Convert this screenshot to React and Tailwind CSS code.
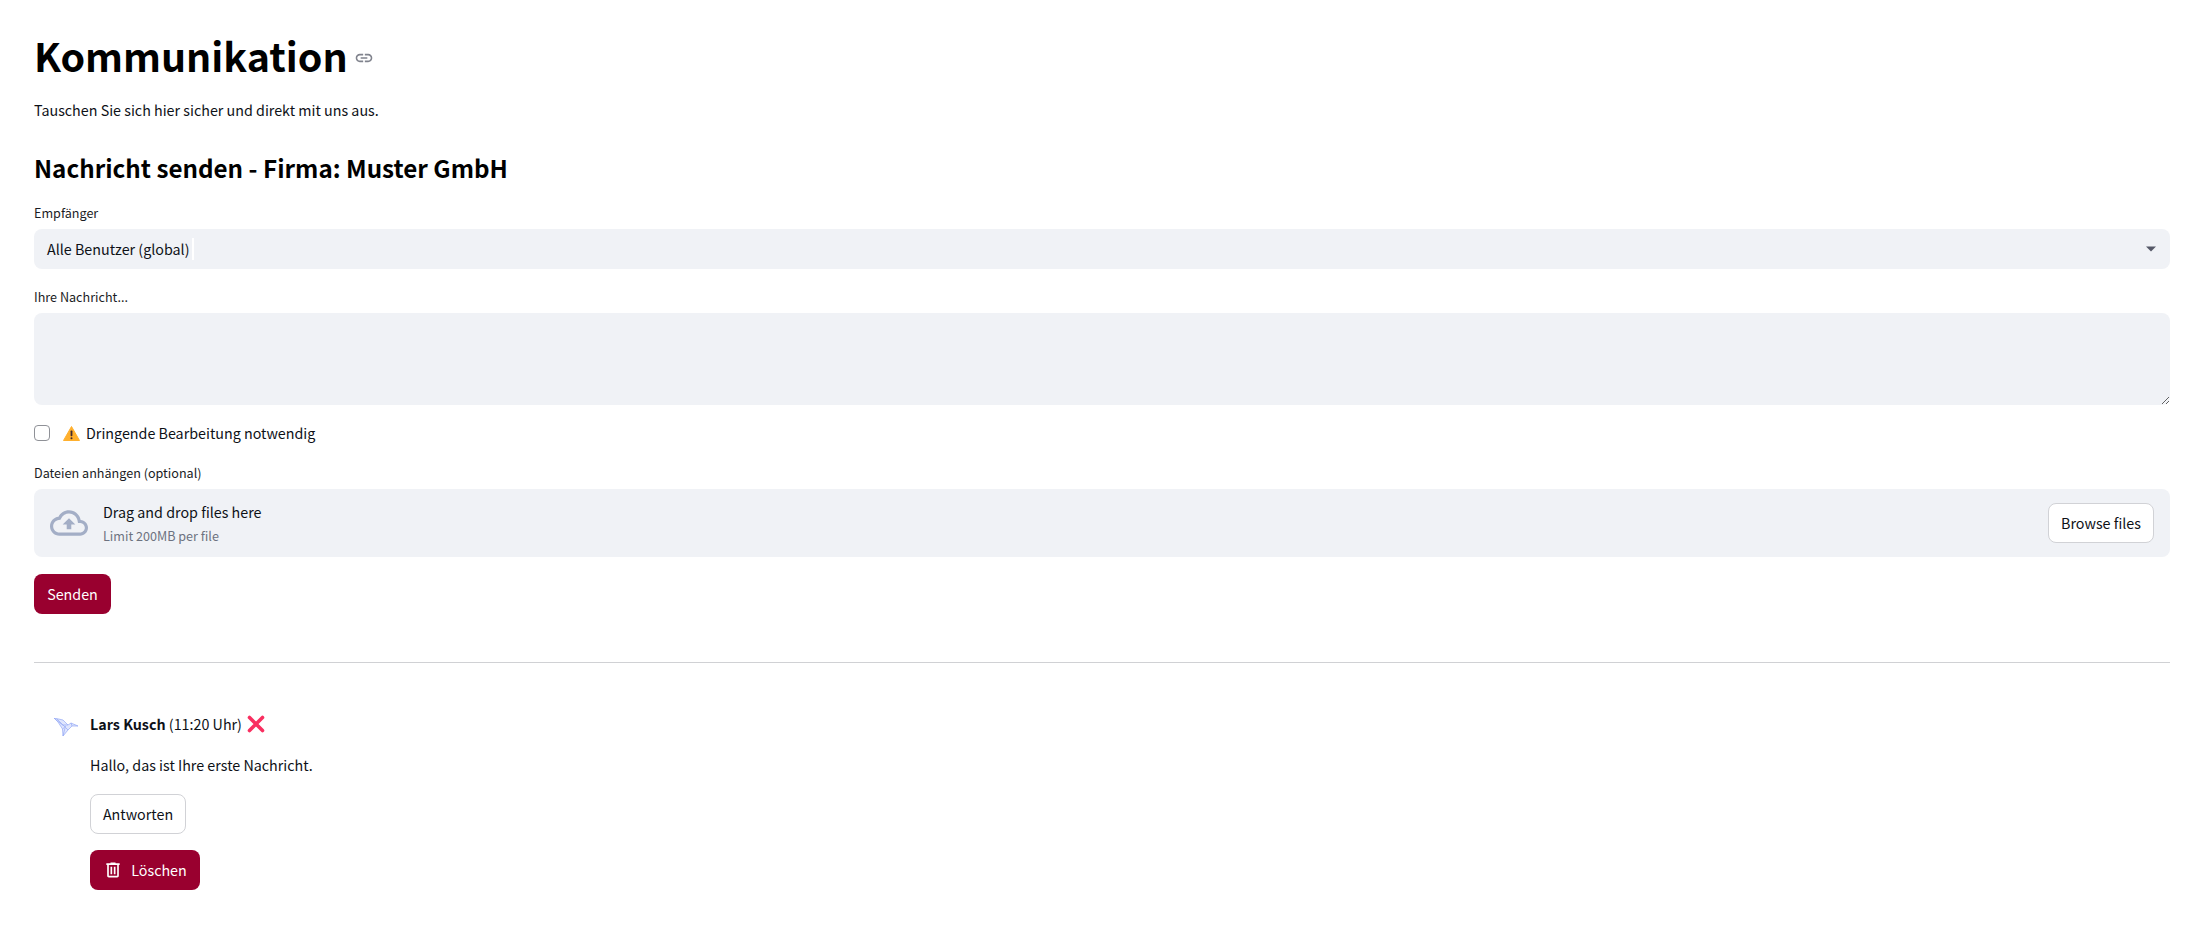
import React from 'react';

const FONT = '"Noto Sans CJK SC", "Source Sans Pro", "Noto Sans", sans-serif';

const Label = ({ children }) => (
  <div className="text-[12.6px] leading-[20px] h-[20px] text-[#1a1c24]">{children}</div>
);

const WarnIcon = () => (
  <svg width="17" height="15" viewBox="0 0 17 15" className="shrink-0">
    <path d="M8.5 0.5 L16.5 14.5 L0.5 14.5 Z" fill="#ffb02e" stroke="#ffb02e" strokeLinejoin="round" />
    <rect x="7.6" y="4.5" width="1.8" height="5.8" rx="0.7" fill="#402a32" />
    <circle cx="8.5" cy="12.2" r="1" fill="#402a32" />
  </svg>
);

const CrossIcon = () => (
  <svg width="18" height="18" viewBox="0 0 18 18" className="shrink-0">
    <path d="M2.5 2.5 L15.5 15.5 M15.5 2.5 L2.5 15.5" stroke="#f92f60" strokeWidth="3.6" strokeLinecap="round" />
  </svg>
);

// small hummingbird avatar
const Bird = () => (
  <svg width="24" height="18" viewBox="0 0 24 18" fill="none" stroke="#93a7f5" strokeWidth="0.7">
    <path d="M0 0 L9 2 L14 7 L17 5 L24 8 L18 8 L14 12 L9 18 L8.5 11 L4 4 Z" fill="#dfe6fd" />
    <path d="M0 0 L8.5 7 L14 7 M3 1 L10 8 L14 12 M8.5 11 L12 8 M9 18 L11 10 M17 5 L18 8" />
  </svg>
);

export default function App() {
  return (
    <div className="min-h-[932px] bg-white pl-[34px] pr-[21px] text-[#0e1117] overflow-hidden" style={{ fontFamily: FONT }}>
      {/* Page header */}
      <div className="flex items-center pt-[25px] h-[84px]">
        <h1 className="text-[39.4px] leading-[56px] font-bold text-black">Kommunikation</h1>
        <svg width="20" height="20" viewBox="0 0 24 24" fill="#80838d" className="ml-[6px] mt-[6px]">
          <path d="M3.9 12c0-1.71 1.39-3.1 3.1-3.1h4V7H7c-2.76 0-5 2.24-5 5s2.24 5 5 5h4v-1.9H7c-1.71 0-3.1-1.39-3.1-3.1zM8 13h8v-2H8v2zm9-6h-4v1.9h4c1.71 0 3.1 1.39 3.1 3.1s-1.39 3.1-3.1 3.1h-4V17h4c2.76 0 5-2.24 5-5s-2.24-5-5-5z" />
        </svg>
      </div>
      <p className="mt-[14px] text-[14.3px] leading-[24px]">Tauschen Sie sich hier sicher und direkt mit uns aus.</p>

      <h2 className="mt-[26px] text-[24.2px] leading-[40px] font-semibold text-black">Nachricht senden - Firma: Muster GmbH</h2>

      {/* Message form */}
      <div className="mt-[15px]">
        <Label>Empfänger</Label>
      </div>
      <div className="mt-[6px] h-[40px] rounded-lg bg-[#f0f2f6] flex items-center justify-between pl-[13px] pr-[13px]">
        <div className="flex items-center">
          <span className="text-[14.3px] leading-[24px]">Alle Benutzer (global)</span>
          <span className="ml-[2px] w-[2px] h-[22px] bg-white" />
        </div>
        <svg width="12" height="8" viewBox="0 0 12 8" fill="#555867"><path d="M1 1.5 h10 L6 6.5 Z" /></svg>
      </div>

      <div className="mt-[18px]">
        <Label>Ihre Nachricht...</Label>
      </div>
      <textarea className="mt-[6px] block w-full h-[92px] rounded-lg bg-[#f0f2f6] outline-none" />

      <div className="mt-[16px] flex items-center h-[24px]">
        <div className="w-[16px] h-[16px] rounded-[4px] border border-[#8f9197] bg-white" />
        <div className="ml-[13px] flex items-center gap-[6px]">
          <WarnIcon />
          <span className="text-[14.3px] leading-[24px]">Dringende Bearbeitung notwendig</span>
        </div>
      </div>

      <div className="mt-[18px]">
        <Label>Dateien anhängen (optional)</Label>
      </div>
      <div className="mt-[6px] h-[68px] rounded-lg bg-[#f0f2f6] flex items-center justify-between pl-[16px] pr-[16px]">
        <div className="flex items-center">
          <svg width="38" height="38" viewBox="0 0 24 24" fill="#a3aec6" className="shrink-0">
            <path d="M19.35 10.04C18.67 6.59 15.64 4 12 4 9.11 4 6.6 5.64 5.35 8.04 2.34 8.36 0 10.91 0 14c0 3.31 2.69 6 6 6h13c2.76 0 5-2.24 5-5 0-2.64-2.05-4.78-4.65-4.96zM19 18H6c-2.21 0-4-1.79-4-4 0-2.05 1.53-3.76 3.56-3.97l1.07-.11.5-.95C8.08 7.14 9.94 6 12 6c2.62 0 4.88 1.86 5.39 4.43l.3 1.5 1.53.11c1.56.1 2.78 1.41 2.78 2.96 0 1.65-1.35 3-3 3zM8 13h2.55v3h2.9v-3H16l-4-4z" />
          </svg>
          <div className="ml-[15px] flex flex-col">
            <span className="text-[14.3px] leading-[24px]">Drag and drop files here</span>
            <span className="text-[12.6px] leading-[20px] mt-[2px] text-[#6d7280]">Limit 200MB per file</span>
          </div>
        </div>
        <button className="w-[106px] h-[40px] rounded-lg border border-[#d1d2d6] bg-white text-[14.3px] leading-[24px]">Browse files</button>
      </div>

      <button className="mt-[17px] block w-[77px] h-[40px] rounded-lg bg-[#99002f] text-white text-[14.3px] leading-[24px]">Senden</button>

      <hr className="mt-[48px] border-t border-[#d0d1d4]" />

      {/* Chat message */}
      <div className="mt-[49px] ml-[16px] flex">
        <div className="w-[40px] shrink-0 pt-[6px] pl-[4px]">
          <Bird />
        </div>
        <div className="flex flex-col items-start">
          <div className="flex items-center h-[24px]">
            <span className="text-[14.3px] leading-[24px]"><b className="font-semibold">Lars Kusch</b> (11:20 Uhr)</span>
            <span className="ml-[5px]"><CrossIcon /></span>
          </div>
          <p className="mt-[17px] text-[14.3px] leading-[24px]">Hallo, das ist Ihre erste Nachricht.</p>
          <button className="mt-[17px] w-[96px] h-[40px] rounded-lg border border-[#d1d2d6] bg-white text-[14.3px] leading-[24px]">Antworten</button>
          <button className="mt-[16px] w-[110px] h-[40px] rounded-lg bg-[#99002f] text-white text-[14.3px] leading-[24px] flex items-center justify-center gap-[8px]">
            <svg width="20" height="20" viewBox="0 0 24 24" fill="#fff">
              <path d="M7 21q-.825 0-1.412-.587Q5 19.825 5 19V6H4V4h5V3h6v1h5v2h-1v13q0 .825-.587 1.413Q17.825 21 17 21ZM17 6H7v13h10ZM9 17h2V8H9Zm4 0h2V8h-2ZM7 6v13Z" />
            </svg>
            Löschen
          </button>
        </div>
      </div>
    </div>
  );
}
